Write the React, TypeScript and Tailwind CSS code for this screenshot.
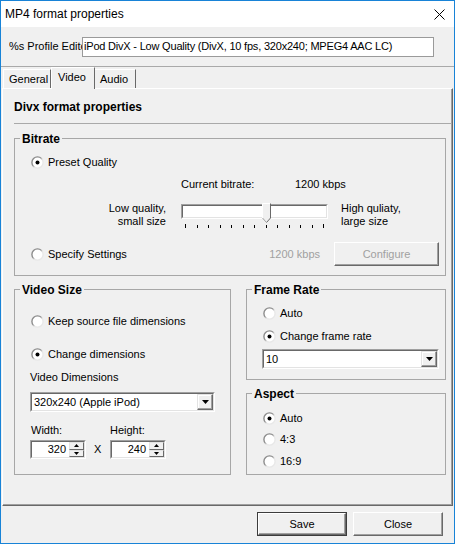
import React from "react";

function Radio({ checked = false }: { checked?: boolean }) {
  return (
    <svg width="13" height="13" viewBox="0 0 13 13" className="shrink-0">
      <defs>
        <linearGradient id="radioEdge" x1="0" y1="0" x2="1" y2="1">
          <stop offset="0.4" stopColor="#8c8c8c" />
          <stop offset="0.6" stopColor="#e8e8e8" />
        </linearGradient>
      </defs>
      <circle cx="6.5" cy="6.5" r="5.6" fill="#fff" stroke="url(#radioEdge)" strokeWidth="1.4" />
      {checked && <circle cx="6.5" cy="6.5" r="2" fill="#000" />}
    </svg>
  );
}

function RadioRow({ label, checked, className = "" }: { label: string; checked?: boolean; className?: string }) {
  return (
    <div className={`flex h-[15px] items-center gap-[4px] leading-[15px] ${className}`}>
      <Radio checked={checked} />
      <span>{label}</span>
    </div>
  );
}

function Combo({ value, className = "" }: { value: string; className?: string }) {
  return (
    <div className={`flex h-[20px] border border-t-[#a0a0a0] border-l-[#a0a0a0] border-r-white border-b-white ${className}`}>
      <div className="flex flex-1 border border-t-[#696969] border-l-[#696969] border-r-[#e3e3e3] border-b-[#e3e3e3] bg-white">
        <span className="flex-1 pl-[2px] leading-[16px]">{value}</span>
        <div className="flex w-[16px] items-center justify-center border border-t-[#e3e3e3] border-l-[#e3e3e3] border-r-[#696969] border-b-[#696969] bg-[#f0f0f0] shadow-[inset_-1px_-1px_0_#a0a0a0,inset_1px_1px_0_#fff]">
          <svg width="7" height="4" viewBox="0 0 7 4">
            <polygon points="0,0 7,0 3.5,4" fill="#000" />
          </svg>
        </div>
      </div>
    </div>
  );
}

function Spin({ value }: { value: string }) {
  return (
    <div className="flex h-[19px] w-[56px] border border-t-[#a0a0a0] border-l-[#a0a0a0] border-r-white border-b-white">
      <div className="flex flex-1 border border-t-[#696969] border-l-[#696969] border-r-[#e3e3e3] border-b-[#e3e3e3] bg-white">
        <span className="flex-1 pr-[3px] text-right leading-[15px]">{value}</span>
        <div className="flex w-[15px] flex-col">
          <div className="flex flex-1 items-center justify-center border border-t-[#e3e3e3] border-l-[#e3e3e3] border-r-[#696969] border-b-[#696969] bg-[#f0f0f0]">
            <svg width="5" height="3" viewBox="0 0 5 3">
              <polygon points="0,3 5,3 2.5,0" fill="#000" />
            </svg>
          </div>
          <div className="flex flex-1 items-center justify-center border border-t-[#e3e3e3] border-l-[#e3e3e3] border-r-[#696969] border-b-[#696969] bg-[#f0f0f0]">
            <svg width="5" height="3" viewBox="0 0 5 3">
              <polygon points="0,0 5,0 2.5,3" fill="#000" />
            </svg>
          </div>
        </div>
      </div>
    </div>
  );
}

function Button({ label, primary, disabled, className = "" }: { label: string; primary?: boolean; disabled?: boolean; className?: string }) {
  return (
    <div className={`${primary ? "border border-[#3c3c3c]" : ""} ${className}`}>
      <div
        className={`flex h-full items-center justify-center border border-t-white border-l-white border-r-[#696969] border-b-[#696969] bg-[#f0f0f0] shadow-[inset_-1px_-1px_0_#a0a0a0] ${
          disabled ? "text-[#a0a0a0]" : "text-black"
        }`}
      >
        {label}
      </div>
    </div>
  );
}

// group box: the caption sits over the top border line
function Group({ title, className = "", children }: { title: string; className?: string; children: React.ReactNode }) {
  return (
    <div className={`relative border border-[#a7a7a7] ${className}`}>
      <span className="absolute -top-[7px] left-[5px] bg-[#f0f0f0] px-[2px] text-[12px] font-bold leading-[15px]">{title}</span>
      {children}
    </div>
  );
}

const TICKS = Array.from({ length: 13 }, (_, i) => i);

export default function App() {
  return (
    <div className="flex h-[544px] w-[455px] flex-col overflow-hidden border border-[#1883d7] bg-[#f0f0f0] font-['Liberation_Sans',Arial,sans-serif] text-[11px] text-black">
      {/* title bar */}
      <div className="flex h-[26px] items-center bg-white pl-[4px]">
        <span className="flex-1 text-[12px]">MP4 format properties</span>
        <svg width="11" height="11" viewBox="0 0 11 11" className="mr-[9px]">
          <path d="M0.5 0.5 L10.5 10.5 M10.5 0.5 L0.5 10.5" stroke="#000" strokeWidth="1" />
        </svg>
      </div>

      {/* profile editor row */}
      <div className="flex h-[40px] items-start border-b border-[#a9a9a9] pt-[10px]">
        <div className="ml-[8px] w-[73px] overflow-hidden whitespace-nowrap pt-[2px] leading-[15px]">%s Profile Editor</div>
        <div className="h-[20px] w-[352px] whitespace-nowrap border border-[#9a9a9a] bg-white pl-[1px] leading-[17px] tracking-[-0.2px]">
          iPod DivX - Low Quality (DivX, 10 fps, 320x240; MPEG4 AAC LC)
        </div>
      </div>

      {/* tabs */}
      <div className="flex h-[21px] items-end pl-[2px]">
        <div className="h-[19px] w-[48px] border-t border-l border-white border-r border-r-[#696969] pl-[5px] pt-[2px] leading-[15px]">General</div>
        <div className="relative z-10 -mb-px h-[22px] w-[44px] border-t border-l border-white border-r border-r-[#696969] bg-[#f0f0f0] pl-[6px] pt-[2px] leading-[15px]">
          Video
        </div>
        <div className="h-[19px] w-[41px] border-t border-white border-r border-r-[#696969] pl-[5px] pt-[2px] leading-[15px]">Audio</div>
      </div>

      {/* tab panel */}
      <div className="ml-[1px] mr-[1px] flex h-[418px] flex-col border border-t-white border-l-white border-r-[#696969] border-b-[#696969] shadow-[inset_-1px_-1px_0_#a0a0a0]">
        <div className="ml-[11px] h-[35px] border-b border-[#a9a9a9] pt-[11px] text-[12px] font-bold leading-[15px]">Divx format properties</div>

        <Group title="Bitrate" className="ml-[11px] mr-[6px] mt-[14px] pb-[9px]">
          <RadioRow label="Preset Quality" checked className="mt-[16px] pl-[16px]" />

          <div className="mt-[7px] flex h-[15px] leading-[15px]">
            <span className="ml-[166px] w-[114px]">Current bitrate:</span>
            <span>1200 kbps</span>
          </div>

          <div className="mt-[10px] flex">
            <div className="w-[151px] text-right leading-[13px]">
              Low quality,
              <br />
              small size
            </div>
            <div className="relative ml-[15px] w-[147px] pt-[2px]">
              <div className="h-[15px] border border-t-[#a0a0a0] border-l-[#a0a0a0] border-r-white border-b-white">
                <div className="h-full border border-t-[#696969] border-l-[#696969] border-r-[#e3e3e3] border-b-[#e3e3e3] bg-white" />
              </div>
              <svg width="9" height="20" viewBox="0 0 9 20" className="absolute left-[81px] top-[1px]">
                <polygon points="0.5,0.5 8.5,0.5 8.5,15 4.5,19.5 0.5,15" fill="#f0f0f0" />
                <polyline points="0.5,15 0.5,0.5 8.5,0.5" fill="none" stroke="#fff" />
                <polyline points="8.5,0.5 8.5,15 4.5,19.5" fill="none" stroke="#696969" />
                <line x1="0.5" y1="15" x2="4.5" y2="19.5" stroke="#a0a0a0" />
              </svg>
              <div className="mt-[5px] flex h-[4px] items-end justify-between px-[4px]">
                {TICKS.map((i) => (
                  <span key={i} className={`w-px bg-black ${i === 0 || i === 12 ? "h-[4px]" : "h-[3px]"}`} />
                ))}
              </div>
            </div>
            <div className="ml-[13px] leading-[13px]">
              High quliaty,
              <br />
              large size
            </div>
          </div>

          <div className="mt-[14px] flex items-center pl-[16px]">
            <RadioRow label="Specify Settings" />
            <span className="ml-auto text-[#a0a0a0]">1200 kbps</span>
            <Button label="Configure" disabled className="ml-[14px] mr-[6px] h-[24px] w-[105px]" />
          </div>
        </Group>

        <div className="ml-[11px] mr-[6px] mt-[13px] grid grid-cols-[217px_200px] gap-x-[15px]">
          <Group title="Video Size" className="pb-[15px]">
            <RadioRow label="Keep source file dimensions" className="mt-[24px] pl-[16px]" />
            <RadioRow label="Change dimensions" checked className="mt-[18px] pl-[16px]" />
            <div className="mt-[8px] pl-[15px] leading-[15px]">Video Dimensions</div>
            <Combo value="320x240 (Apple iPod)" className="ml-[15px] mt-[7px] w-[185px]" />
            <div className="ml-[15px] mt-[11px] flex leading-[15px]">
              <span className="w-[80px] pl-[1px]">Width:</span>
              <span>Height:</span>
            </div>
            <div className="ml-[15px] mt-[2px] flex items-center">
              <Spin value="320" />
              <span className="ml-[8px] mr-[9px] w-[7px] leading-[15px]">X</span>
              <Spin value="240" />
            </div>
          </Group>

          <div className="flex flex-col">
            <Group title="Frame Rate" className="pb-[10px]">
              <RadioRow label="Auto" className="mt-[16px] pl-[16px]" />
              <RadioRow label="Change frame rate" checked className="mt-[8px] pl-[16px]" />
              <Combo value="10" className="ml-[15px] mr-[6px] mt-[5px]" />
            </Group>
            <Group title="Aspect" className="mt-[13px] flex-1">
              <RadioRow label="Auto" checked className="mt-[17px] pl-[16px]" />
              <RadioRow label="4:3" className="mt-[6px] pl-[16px]" />
              <RadioRow label="16:9" className="mt-[7px] pl-[16px]" />
            </Group>
          </div>
        </div>
      </div>

      {/* bottom buttons */}
      <div className="flex flex-1 justify-end gap-[6px] pr-[11px] pt-[6px]">
        <Button label="Save" primary className="h-[24px] w-[90px]" />
        <Button label="Close" className="h-[24px] w-[90px]" />
      </div>
    </div>
  );
}
